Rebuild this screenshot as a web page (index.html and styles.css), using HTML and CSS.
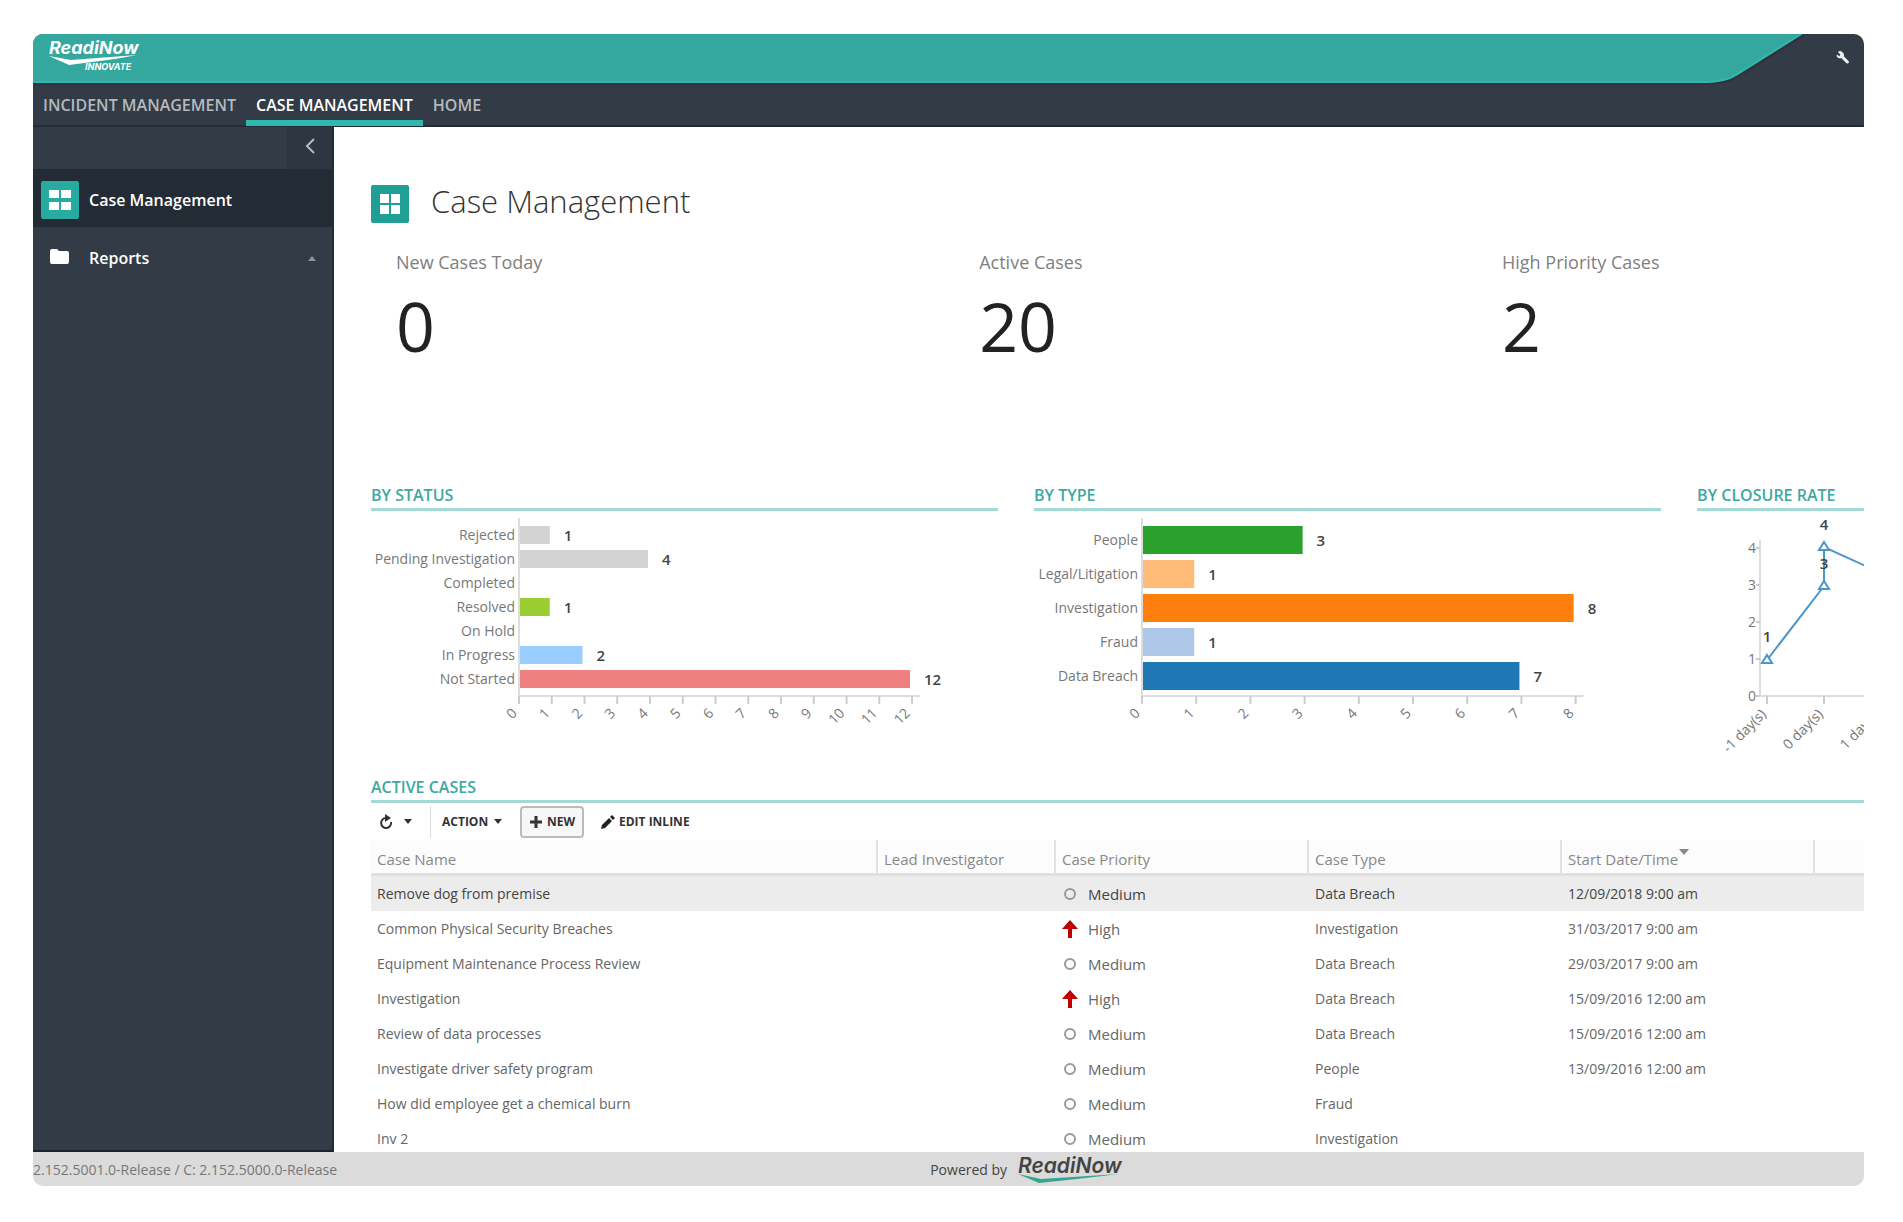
FILE: index.html
```html
<!DOCTYPE html>
<html lang="en">

<head>
    <meta charset="UTF-8">
    <meta name="viewport" content="width=device-width, initial-scale=1.0">
    <title>Case Management</title>
    <link rel="stylesheet" href="styles.css">
</head>

<body>

    <div class="app">
        <header class="topbar">
            <a class="brand" href="#" aria-label="ReadiNow Innovate">
                <svg class="logo" viewBox="0 0 94 36">
                    <text class="logo-name" x="2" y="16">ReadiNow</text>
                    <path d="M2 18 L22 27 L68 21 L90 17 L24 22 Z" fill="#ffffff" />
                    <text class="logo-sub" x="38" y="32">INNOVATE</text>
                </svg>
            </a>
            <svg class="topbar-corner" viewBox="0 0 104 51">
                <path d="M0 0 H103 L38 41 Q26 49 4 49 H0 Z" fill="#34a79f" />
                <path d="M0 50 H4 Q27 50 39 42 L104 1" fill="none" stroke="#332f3d" stroke-width="2" />
                <path d="M0 48 H4 Q26 48 37 40 L101 0" fill="none" stroke="#2fb8ad" stroke-width="2" />
            </svg>
            <button class="tools" aria-label="Configure">
                <svg viewBox="0 0 16 16" width="14" height="14">
                    <path d="M2 1 L5 4 L4 6 L1 4 C0 7 3 9 6 8 L12 14 C14 15 16 13 14 11 L9 6 C10 3 7 0 4 0 Z" fill="#eef0f2" />
                </svg>
            </button>
        </header>

        <nav class="tabs">
            <a href="#">INCIDENT MANAGEMENT</a>
            <a href="#" class="active">CASE MANAGEMENT</a>
            <a href="#">HOME</a>
        </nav>

        <div class="body">
            <aside class="sidebar">
                <div class="collapse-row">
                    <button class="collapse" aria-label="Collapse menu">
                        <svg viewBox="0 0 10 16" width="10" height="16">
                            <path d="M9 1 L2 8 L9 15" fill="none" stroke="#b5bbc1" stroke-width="2" />
                        </svg>
                    </button>
                </div>
                <a href="#" class="side-item active">
                    <svg class="tile" viewBox="0 0 38 38">
                        <rect width="38" height="38" rx="2" fill="#27aa9f" />
                        <path d="M8 9h10v8H8zM20 9h10v8H20zM8 21h10v8H8zM20 21h10v8H20z" fill="#fff" />
                    </svg>
                    <span>Case Management</span>
                </a>
                <a href="#" class="side-item">
                    <svg class="tile" viewBox="0 0 38 38">
                        <path d="M9 12 q0-2 2-2 h5 l2 2 h8 q2 0 2 2 v9 q0 2-2 2 H11 q-2 0-2-2 Z" fill="#fff" />
                    </svg>
                    <span>Reports</span>
                    <svg class="up" viewBox="0 0 8 6" width="8" height="6"><path d="M0 6 L4 1 L8 6 Z" fill="#8b939b" /></svg>
                </a>
            </aside>

            <main class="content">
                <div class="page-title">
                    <svg class="tile" viewBox="0 0 38 38">
                        <rect width="38" height="38" rx="2" fill="#1f9f95" />
                        <path d="M9 9h9v9H9zM20 9h9v9h-9zM9 20h9v9H9zM20 20h9v9h-9z" fill="#fff" />
                    </svg>
                    <h1>Case Management</h1>
                </div>

                <div class="kpis">
                    <div class="kpi"><p>New Cases Today</p><strong>0</strong></div>
                    <div class="kpi"><p>Active Cases</p><strong>20</strong></div>
                    <div class="kpi"><p>High Priority Cases</p><strong>2</strong></div>
                </div>

                <div class="charts">
                    <section>
                        <h2>BY STATUS</h2>
                        <svg class="chart" id="statusChart" viewBox="0 0 627 250"></svg>
                    </section>
                    <section>
                        <h2>BY TYPE</h2>
                        <svg class="chart" id="typeChart" viewBox="0 0 627 250"></svg>
                    </section>
                    <section>
                        <h2>BY CLOSURE RATE</h2>
                        <svg class="chart" id="closureChart" viewBox="0 0 627 250"></svg>
                    </section>
                </div>

                <section class="cases">
                    <h2>ACTIVE CASES</h2>
                    <div class="toolbar">
                        <button class="refresh" aria-label="Refresh">
                            <svg viewBox="0 0 16 16" width="16" height="16">
                                <path d="M13 8 A5 5 0 1 1 8 4" fill="none" stroke="#333" stroke-width="2" />
                                <path d="M7 0 L13 4 L7 8 Z" fill="#333" />
                            </svg>
                            <svg class="caret" viewBox="0 0 8 5"><path d="M0 0 H8 L4 5 Z" /></svg>
                        </button>
                        <button class="action">ACTION <svg class="caret" viewBox="0 0 8 5"><path d="M0 0 H8 L4 5 Z" /></svg></button>
                        <button class="new">
                            <svg viewBox="0 0 14 14" width="14" height="14"><path d="M7 1 V13 M1 7 H13" stroke="#333" stroke-width="3" /></svg>
                            NEW
                        </button>
                        <button class="edit">
                            <svg viewBox="0 0 14 14" width="14" height="14"><path d="M0 14 L1 10 L8 3 L11 6 L4 13 Z M9 2 L11 0 L14 3 L12 5 Z" fill="#222" /></svg>
                            EDIT INLINE
                        </button>
                    </div>
                    <table>
                        <colgroup>
                            <col class="c-name">
                            <col class="c-lead">
                            <col class="c-mid">
                            <col class="c-mid">
                            <col class="c-mid">
                            <col>
                        </colgroup>
                        <thead>
                            <tr>
                                <th>Case Name</th>
                                <th>Lead Investigator</th>
                                <th>Case Priority</th>
                                <th>Case Type</th>
                                <th>Start Date/Time<svg class="sort" viewBox="0 0 10 6"><path d="M0 0 H10 L5 6 Z" fill="#888" /></svg></th>
                                <th></th>
                            </tr>
                        </thead>
                        <tbody id="caseRows"></tbody>
                    </table>
                </section>
            </main>
        </div>

        <footer class="footer">
            <span class="version">2.152.5001.0-Release / C: 2.152.5000.0-Release</span>
            <span class="powered">Powered by
                <svg class="logo-footer" viewBox="0 0 104 30">
                    <text x="1" y="19">ReadiNow</text>
                    <path d="M1 20 L22 29 L60 25 L102 20 L24 25 Z" fill="#35a590" />
                </svg>
            </span>
        </footer>
    </div>

    <script>
        function text(x, y, anchor, value, cls, rotate) {
            let turn = rotate ? ' transform="rotate(-45 ' + x + ' ' + y + ')"' : '';
            return '<text x="' + x + '" y="' + y + '" text-anchor="' + anchor + '" class="' + cls + '"' + turn + '>' + value + '</text>';
        }

        // Horizontal bar chart, axis line at y = 185
        function barChart(id, opt) {
            let out = '<path class="axis" d="M' + opt.left + ' 7 V185 H' + (opt.left + opt.step * opt.max + 8) + '" />';
            for (let i = 0; i <= opt.max; i++) {
                let x = opt.left + opt.step * i;
                out += '<path class="tick" d="M' + x + ' 185 v8" />' + text(x - 1, 203, 'end', i, 'label', true);
            }
            opt.bars.forEach(function (bar, i) {
                let y = opt.top + opt.pitch * i;
                out += text(opt.left - 4, y + 5, 'end', bar[0], 'label');
                if (bar[1]) {
                    let w = opt.step * bar[1] - 3;
                    out += '<rect x="' + (opt.left + 1) + '" y="' + (y - opt.thick / 2) + '" width="' + w + '" height="' + opt.thick + '" fill="' + bar[2] + '" />';
                    out += text(opt.left + w + 15, y + 6, 'start', bar[1], 'value');
                }
            });
            document.getElementById(id).innerHTML = out;
        }

        barChart('statusChart', {
            left: 148, step: 32.75, max: 12, top: 24, pitch: 24, thick: 18,
            bars: [
                ['Rejected', 1, '#d3d3d3'],
                ['Pending Investigation', 4, '#d3d3d3'],
                ['Completed', 0],
                ['Resolved', 1, '#9acd32'],
                ['On Hold', 0],
                ['In Progress', 2, '#99ccff'],
                ['Not Started', 12, '#f08080']
            ]
        });

        barChart('typeChart', {
            left: 108, step: 54.2, max: 8, top: 29, pitch: 34, thick: 28,
            bars: [
                ['People', 3, '#2ca02c'],
                ['Legal/Litigation', 1, '#ffbb78'],
                ['Investigation', 8, '#ff7f0e'],
                ['Fraud', 1, '#aec7e8'],
                ['Data Breach', 7, '#1f77b4']
            ]
        });

        // Closure rate line
        let line = '<path class="axis" d="M63 29 V185 H620" />';
        for (let i = 0; i <= 4; i++) {
            let y = 185 - 37 * i;
            line += '<path class="tick" d="M63 ' + y + ' h-4" />' + text(59, y + 5, 'end', i, 'label');
        }
        ['-1 day(s)', '0 day(s)', '1 day(s)'].forEach(function (day, i) {
            let x = 70 + 57 * i;
            line += '<path class="tick" d="M' + x + ' 185 v8" />' + text(x, 204, 'end', day, 'label', true);
        });
        line += '<path d="M70 149 L127 75 V36 L184 62" fill="none" stroke="#4a95c9" stroke-width="2" />';
        [[70, 149, 1, 131], [127, 75, 3, 58], [127, 36, 4, 19]].forEach(function (p) {
            line += '<path d="M' + p[0] + ' ' + (p[1] - 5) + ' l5 8 h-10 Z" fill="#fff" stroke="#4a95c9" stroke-width="2" />';
            line += text(p[0], p[3], 'middle', p[2], 'value');
        });
        document.getElementById('closureChart').innerHTML = line;

        let cases = [
            ['Remove dog from premise', 'Medium', 'Data Breach', '12/09/2018 9:00 am'],
            ['Common Physical Security Breaches', 'High', 'Investigation', '31/03/2017 9:00 am'],
            ['Equipment Maintenance Process Review', 'Medium', 'Data Breach', '29/03/2017 9:00 am'],
            ['Investigation', 'High', 'Data Breach', '15/09/2016 12:00 am'],
            ['Review of data processes', 'Medium', 'Data Breach', '15/09/2016 12:00 am'],
            ['Investigate driver safety program', 'Medium', 'People', '13/09/2016 12:00 am'],
            ['How did employee get a chemical burn', 'Medium', 'Fraud', ''],
            ['Inv 2', 'Medium', 'Investigation', '']
        ];
        let icons = {
            Medium: '<circle cx="8" cy="9" r="5" fill="none" stroke="#999" stroke-width="2" />',
            High: '<path d="M8 0 L16 9 H10 V18 H6 V9 H0 Z" fill="#c00000" />'
        };

        cases.forEach(function (c, i) {
            let row = document.createElement('tr');
            if (i === 0) row.className = 'selected';
            row.innerHTML = '<td>' + c[0] + '</td><td></td><td><span class="priority"><svg viewBox="0 0 18 18">' + icons[c[1]] +
                '</svg>' + c[1] + '</span></td><td>' + c[2] + '</td><td>' + c[3] + '</td><td></td>';
            document.getElementById('caseRows').appendChild(row);
        });
    </script>

</body>

</html>
```
FILE: styles.css
```css
* {
    box-sizing: border-box;
}

body {
    margin: 0;
    padding: 34px 39px 36px 33px;
    height: 100vh;
    background: #ffffff;
    font-family: "Open Sans", "Noto Sans", sans-serif;
    font-size: 14px;
    color: #666666;
}

a {
    text-decoration: none;
}

button {
    border: 0;
    padding: 0;
    background: none;
    font-family: inherit;
    cursor: pointer;
}

h1, h2, p {
    margin: 0;
}

.app {
    display: flex;
    flex-direction: column;
    height: 100%;
    border-radius: 10px;
    overflow: hidden;
}

/* top bar */
.topbar {
    display: flex;
    height: 51px;
    background: #323b46;
}

.brand {
    flex: 1;
    padding: 4px 14px;
    background: #34a79f;
    border-bottom: 2px solid #332f3d;
    box-shadow: inset 0 -2px #2fb8ad;
}

.logo {
    width: 94px;
    height: 36px;
    overflow: visible;
}

.logo-name {
    font: italic 700 18px Inter, sans-serif;
    fill: #ffffff;
}

.logo-sub {
    font: italic 700 9px Inter, sans-serif;
    fill: #ffffff;
}

.topbar-corner {
    width: 104px;
    height: 51px;
}

.tools {
    width: 60px;
    padding-left: 18px;
}

.tabs {
    display: flex;
    height: 42px;
    background: #323b46;
    border-bottom: 2px solid #222b38;
}

.tabs a {
    padding: 0 10px;
    height: 41px;
    line-height: 41px;
    font-size: 16px;
    font-weight: 600;
    color: #b4b9be;
}

.tabs .active {
    color: #ffffff;
    border-bottom: 6px solid #2fb8ad;
}

.body {
    display: flex;
    flex: 1;
    min-height: 0;
}

/* sidebar */
.sidebar {
    flex: 0 0 301px;
    background: #323b46;
    border-right: 2px solid #222b38;
    border-bottom: 2px solid #1b2430;
}

.collapse-row {
    display: flex;
    justify-content: flex-end;
    height: 42px;
}

.collapse {
    width: 45px;
    background: #2e3741;
}

.side-item {
    display: flex;
    align-items: center;
    gap: 18px;
    height: 58px;
    padding: 4px 16px 0 8px;
    color: #ffffff;
    font-size: 16px;
    font-weight: 600;
}

.side-item.active {
    background: #232b35;
}

.side-item span {
    flex: 1;
}

.tile {
    width: 38px;
    height: 38px;
}

.side-item .tile {
    margin-right: -8px;
}

/* dashboard */
.content {
    flex: 1;
    min-width: 0;
    padding: 53px 0 0 37px;
    overflow: hidden;
}

.page-title {
    display: flex;
    gap: 22px;
    height: 58px;
}

.page-title .tile {
    margin-top: 5px;
}

h1 {
    font-size: 31px;
    font-weight: 300;
    line-height: 42px;
    color: #333333;
}

.kpis {
    display: grid;
    grid-template-columns: 58fr 52fr 36fr;
    padding-left: 25px;
    height: 246px;
}

.kpi p {
    font-size: 18px;
    line-height: 48px;
    color: #808080;
}

.kpi strong {
    display: block;
    font-size: 68px;
    font-weight: 400;
    line-height: 80px;
    color: #222222;
}

h2 {
    padding-bottom: 2px;
    border-bottom: 3px solid #a3d9d4;
    font-size: 16px;
    font-weight: 600;
    line-height: 22px;
    color: #3da9a1;
}

.charts {
    display: grid;
    grid-template-columns: repeat(3, 42%);
    gap: 36px;
}

.chart {
    display: block;
    width: 100%;
    overflow: visible;
}

.chart .label {
    font-size: 14px;
    fill: #777777;
}

.chart .value {
    font-size: 15px;
    font-weight: 600;
    fill: #444444;
}

.axis {
    fill: none;
    stroke: #dddddd;
    stroke-width: 2;
}

.tick {
    stroke: #cccccc;
    stroke-width: 2;
}

/* cases list */
.cases {
    margin-top: 15px;
}

.toolbar {
    display: flex;
    align-items: center;
    height: 37px;
}

.toolbar button {
    display: flex;
    align-items: center;
    gap: 4px;
    height: 32px;
    font-size: 12px;
    font-weight: 700;
    color: #333333;
}

.caret {
    width: 8px;
    height: 5px;
    fill: #333333;
}

.toolbar .refresh {
    gap: 10px;
    width: 60px;
    padding-left: 7px;
    border-right: 1px solid #dddddd;
}

.toolbar .action {
    gap: 6px;
    width: 89px;
    padding-left: 11px;
}

.toolbar .new {
    justify-content: center;
    width: 64px;
    border: 2px solid #bbbbbb;
    border-radius: 4px;
    background: #f7f7f7;
}

.toolbar .edit {
    margin-left: 17px;
}

table {
    width: 100%;
    table-layout: fixed;
    border-collapse: separate;
    border-spacing: 0;
}

.c-name {
    width: 507px;
}

.c-lead {
    width: 178px;
}

.c-mid {
    width: 253px;
}

th {
    height: 36px;
    padding: 5px 6px 0;
    border-right: 2px solid #e2e2e2;
    border-bottom: 3px solid #e0e0e0;
    background: #fcfcfc;
    font-size: 15px;
    font-weight: 400;
    line-height: 20px;
    text-align: left;
    color: #888888;
}

th:last-child {
    border-right: 0;
}

.sort {
    width: 12px;
    height: 6px;
    vertical-align: 10px;
}

td {
    height: 35px;
    padding: 0 6px;
    white-space: nowrap;
}

.selected td {
    background: #ececec;
    color: #444444;
}

.priority {
    display: flex;
    align-items: center;
    gap: 8px;
    font-size: 15px;
    line-height: 18px;
}

.priority svg {
    width: 18px;
    height: 18px;
}

/* footer */
.footer {
    display: grid;
    grid-template-columns: 49% auto;
    align-items: center;
    height: 34px;
    background: #dbdbdb;
}

.version {
    font-size: 14px;
    color: #777777;
}

.powered {
    display: flex;
    align-items: center;
    gap: 10px;
    color: #444444;
}

.logo-footer {
    width: 104px;
    height: 30px;
    overflow: visible;
}

.logo-footer text {
    font: italic 600 21px Inter, sans-serif;
    fill: #444444;
}
```
